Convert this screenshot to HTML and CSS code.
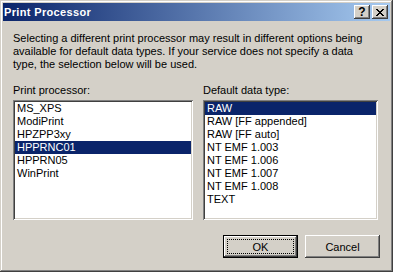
FILE: index.html
```html
<!DOCTYPE html>
<html lang="en">
<head>
<meta charset="UTF-8" />
<title>Print Processor</title>
<link rel="stylesheet" href="styles.css">
</head>
<body>

<div class="window">
  <div class="titlebar">
    <span class="title">Print Processor</span>
    <div class="caption-btns">
      <button class="cap-btn help">?</button>
      <button class="cap-btn close">
        <svg width="8" height="7" viewBox="0 0 8 7" shape-rendering="crispEdges">
          <path d="M0 0h2v1h-2z M6 0h2v1h-2z M1 1h2v1h-2z M5 1h2v1h-2z M2 2h4v1h-4z M3 3h2v1h-2z M2 4h4v1h-4z M1 5h2v1h-2z M5 5h2v1h-2z M0 6h2v1h-2z M6 6h2v1h-2z" fill="#000"/>
        </svg>
      </button>
    </div>
  </div>

  <div class="content">
    <p class="intro">Selecting a different print processor may result in different options being<br>available for default data types. If your service does not specify a data<br>type, the selection below will be used.</p>

    <div class="lists">
      <div class="col col-left">
        <label class="list-label">Print processor:</label>
        <ul class="listbox">
          <li>MS_XPS</li>
          <li>ModiPrint</li>
          <li>HPZPP3xy</li>
          <li class="selected">HPPRNC01</li>
          <li>HPPRN05</li>
          <li>WinPrint</li>
        </ul>
      </div>
      <div class="col col-right">
        <label class="list-label">Default data type:</label>
        <ul class="listbox">
          <li class="selected">RAW</li>
          <li>RAW [FF appended]</li>
          <li>RAW [FF auto]</li>
          <li>NT EMF 1.003</li>
          <li>NT EMF 1.006</li>
          <li>NT EMF 1.007</li>
          <li>NT EMF 1.008</li>
          <li>TEXT</li>
        </ul>
      </div>
    </div>

    <div class="buttons">
      <button class="btn default"><span class="focus">OK</span></button>
      <button class="btn">Cancel</button>
    </div>
  </div>
</div>

</body>
</html>
```

FILE: styles.css
```css
body {
  margin: 0;
  background: #d4d0c8;
  font-family: Tahoma, "Liberation Sans", Arial, sans-serif;
  font-size: 11px;
  color: #000;
}
.window {
  width: 393px;
  height: 272px;
  box-sizing: border-box;
  padding: 3px;
  background: #d4d0c8;
  box-shadow: inset -1px -1px #404040, inset 1px 1px #d4d0c8,
              inset -2px -2px #808080, inset 2px 2px #fff;
}

/* Title bar */
.titlebar {
  height: 18px;
  display: flex;
  align-items: center;
  justify-content: space-between;
  padding: 0 2px 0 1px;
  background: linear-gradient(90deg, #0a246a, #a6caf0);
}
.title {
  color: #fff;
  font-weight: bold;
  font-size: 11px;
  letter-spacing: 0.35px;
}
.caption-btns {
  display: flex;
  gap: 2px;
}
.cap-btn {
  width: 16px;
  height: 14px;
  padding: 0;
  border: none;
  background: #d4d0c8;
  display: flex;
  align-items: center;
  justify-content: center;
  font-family: "Liberation Sans", Arial, sans-serif;
  font-weight: bold;
  font-size: 12px;
  line-height: 14px;
  box-shadow: inset -1px -1px #404040, inset 1px 1px #fff,
              inset -2px -2px #808080, inset 2px 2px #d4d0c8;
}
.cap-btn.help {
  padding-bottom: 1px;
}
.cap-btn.close svg {
  display: block;
  margin-left: -1px;
}

/* Content */
.content {
  padding: 11px 10px 0 10px;
}
.intro {
  margin: 0 0 13px 0;
  line-height: 13px;
  white-space: nowrap;
}
.lists {
  display: flex;
  gap: 10px;
}
.col-left { width: 180px; }
.col-right { width: 175px; }
.list-label {
  display: block;
  height: 13px;
  line-height: 13px;
  margin-bottom: 3px;
}
.listbox {
  list-style: none;
  margin: 0;
  padding: 2px;
  height: 120px;
  box-sizing: border-box;
  background: #fff;
  box-shadow: inset 1px 1px #808080, inset -1px -1px #fff,
              inset 2px 2px #404040, inset -2px -2px #d4d0c8;
}
.listbox li {
  height: 13px;
  line-height: 13px;
  padding-left: 2px;
  white-space: nowrap;
}
.listbox li.selected {
  background: #0a246a;
  color: #fff;
}

/* Dialog buttons */
.buttons {
  display: flex;
  justify-content: flex-end;
  gap: 7px;
  margin-top: 15px;
}
.btn {
  width: 75px;
  height: 23px;
  padding: 0;
  border: none;
  background: #d4d0c8;
  font-family: inherit;
  font-size: 11px;
  color: #000;
  box-shadow: inset -1px -1px #404040, inset 1px 1px #fff,
              inset -2px -2px #808080, inset 2px 2px #d4d0c8;
}
.btn.default {
  position: relative;
  box-shadow: inset 0 0 0 1px #000,
              inset -2px -2px #404040, inset 2px 2px #fff,
              inset -3px -3px #808080;
}
.btn.default .focus {
  position: absolute;
  left: 4px;
  top: 4px;
  right: 4px;
  bottom: 4px;
  border: 1px dotted #000;
  display: flex;
  align-items: center;
  justify-content: center;
}
```
